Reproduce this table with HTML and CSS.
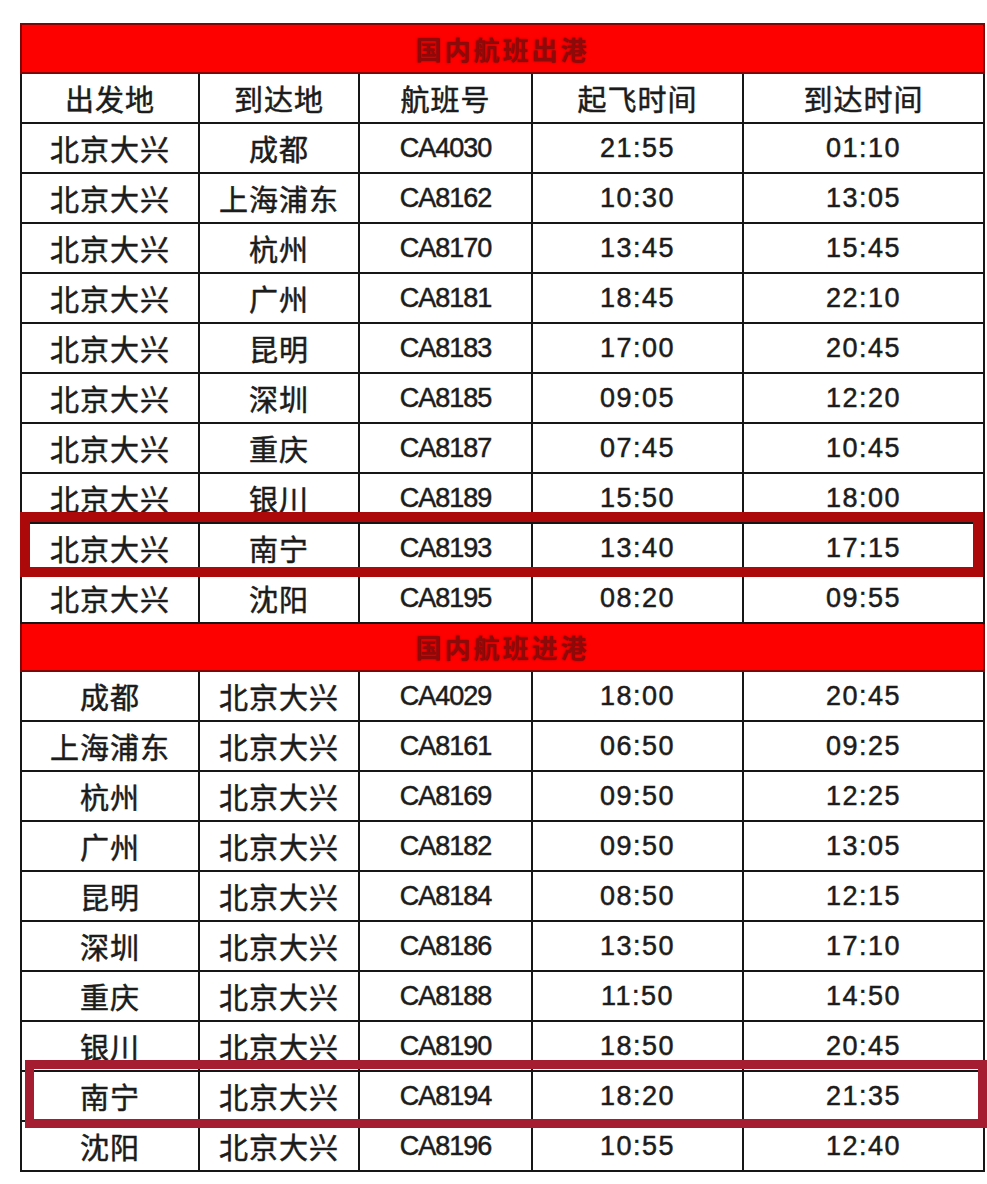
FILE: index.html
```html
<!DOCTYPE html>
<html lang="zh">
<head>
<meta charset="utf-8">
<title>国内航班</title>
<link rel="stylesheet" href="styles.css">
</head>
<body>
<div class="wrap">
<table class="flights">
<colgroup>
<col class="c1"><col class="c2"><col class="c3"><col class="c4"><col class="c5">
</colgroup>
<tbody>
<tr class="banner"><td colspan="5">国内航班出港</td></tr>
<tr class="head"><td>出发地</td><td>到达地</td><td>航班号</td><td>起飞时间</td><td>到达时间</td></tr>
<tr><td class="zh">北京大兴</td><td class="zh">成都</td><td class="no">CA4030</td><td class="tm">21:55</td><td class="tm">01:10</td></tr>
<tr><td class="zh">北京大兴</td><td class="zh">上海浦东</td><td class="no">CA8162</td><td class="tm">10:30</td><td class="tm">13:05</td></tr>
<tr><td class="zh">北京大兴</td><td class="zh">杭州</td><td class="no">CA8170</td><td class="tm">13:45</td><td class="tm">15:45</td></tr>
<tr><td class="zh">北京大兴</td><td class="zh">广州</td><td class="no">CA8181</td><td class="tm">18:45</td><td class="tm">22:10</td></tr>
<tr><td class="zh">北京大兴</td><td class="zh">昆明</td><td class="no">CA8183</td><td class="tm">17:00</td><td class="tm">20:45</td></tr>
<tr><td class="zh">北京大兴</td><td class="zh">深圳</td><td class="no">CA8185</td><td class="tm">09:05</td><td class="tm">12:20</td></tr>
<tr><td class="zh">北京大兴</td><td class="zh">重庆</td><td class="no">CA8187</td><td class="tm">07:45</td><td class="tm">10:45</td></tr>
<tr><td class="zh">北京大兴</td><td class="zh">银川</td><td class="no">CA8189</td><td class="tm">15:50</td><td class="tm">18:00</td></tr>
<tr><td class="zh">北京大兴</td><td class="zh">南宁</td><td class="no">CA8193</td><td class="tm">13:40</td><td class="tm">17:15</td></tr>
<tr><td class="zh">北京大兴</td><td class="zh">沈阳</td><td class="no">CA8195</td><td class="tm">08:20</td><td class="tm">09:55</td></tr>
<tr class="banner banner-in"><td colspan="5">国内航班进港</td></tr>
<tr><td class="zh">成都</td><td class="zh">北京大兴</td><td class="no">CA4029</td><td class="tm">18:00</td><td class="tm">20:45</td></tr>
<tr><td class="zh">上海浦东</td><td class="zh">北京大兴</td><td class="no">CA8161</td><td class="tm">06:50</td><td class="tm">09:25</td></tr>
<tr><td class="zh">杭州</td><td class="zh">北京大兴</td><td class="no">CA8169</td><td class="tm">09:50</td><td class="tm">12:25</td></tr>
<tr><td class="zh">广州</td><td class="zh">北京大兴</td><td class="no">CA8182</td><td class="tm">09:50</td><td class="tm">13:05</td></tr>
<tr><td class="zh">昆明</td><td class="zh">北京大兴</td><td class="no">CA8184</td><td class="tm">08:50</td><td class="tm">12:15</td></tr>
<tr><td class="zh">深圳</td><td class="zh">北京大兴</td><td class="no">CA8186</td><td class="tm">13:50</td><td class="tm">17:10</td></tr>
<tr><td class="zh">重庆</td><td class="zh">北京大兴</td><td class="no">CA8188</td><td class="tm">11:50</td><td class="tm">14:50</td></tr>
<tr><td class="zh">银川</td><td class="zh">北京大兴</td><td class="no">CA8190</td><td class="tm">18:50</td><td class="tm">20:45</td></tr>
<tr><td class="zh">南宁</td><td class="zh">北京大兴</td><td class="no">CA8194</td><td class="tm">18:20</td><td class="tm">21:35</td></tr>
<tr><td class="zh">沈阳</td><td class="zh">北京大兴</td><td class="no">CA8196</td><td class="tm">10:55</td><td class="tm">12:40</td></tr>
</tbody>
</table>
<div class="mark mark-out"></div>
<div class="mark mark-in"></div>
</div>
</body>
</html>
```
FILE: styles.css
```css
html, body {
  margin: 0;
  padding: 0;
  background: #ffffff;
}
body {
  font-family: "Noto Sans CJK SC", "Liberation Sans", sans-serif;
  color: #1c1c1c;
}
.wrap {
  position: relative;
  width: 987px;
  height: 1184px;
  padding-top: 23px;
  padding-left: 20px;
  box-sizing: border-box;
}
.flights {
  border-collapse: collapse;
  table-layout: fixed;
  width: 963px;
}
.c1 { width: 178px; }
.c2 { width: 160px; }
.c3 { width: 173px; }
.c4 { width: 211px; }
.c5 { width: 241px; }
.flights td {
  border: 2px solid #161616;
  height: 48px;
  padding: 0;
  text-align: center;
  vertical-align: middle;
  line-height: 1;
  white-space: nowrap;
  -webkit-text-stroke: 0.5px #1c1c1c;
}
.head td, .zh {
  font-size: 29px;
  letter-spacing: 1px;
}
.no {
  font-family: "Liberation Sans", Arial, sans-serif;
  font-size: 27px;
  letter-spacing: -1px;
}
.tm {
  font-family: "Liberation Sans", Arial, sans-serif;
  font-size: 27px;
  letter-spacing: 1.5px;
}
.flights .banner td {
  background: #fd0000;
  border: 2px solid #7e0606;
  height: 47px;
  color: #8c0a0a;
  font-size: 26px;
  font-weight: 700;
  letter-spacing: 3px;
  text-shadow: 0 0 2px #a00000;
  -webkit-text-stroke: 0;
}
.flights .banner-in td {
  height: 46px;
}
.mark {
  position: absolute;
  box-sizing: border-box;
}
.mark-out {
  left: 20px;
  top: 512px;
  width: 963px;
  height: 65px;
  border: 10px solid #ac0a0a;
}
.mark-in {
  left: 25px;
  top: 1060px;
  width: 962px;
  height: 68px;
  border: 9px solid #a51d30;
}
```
